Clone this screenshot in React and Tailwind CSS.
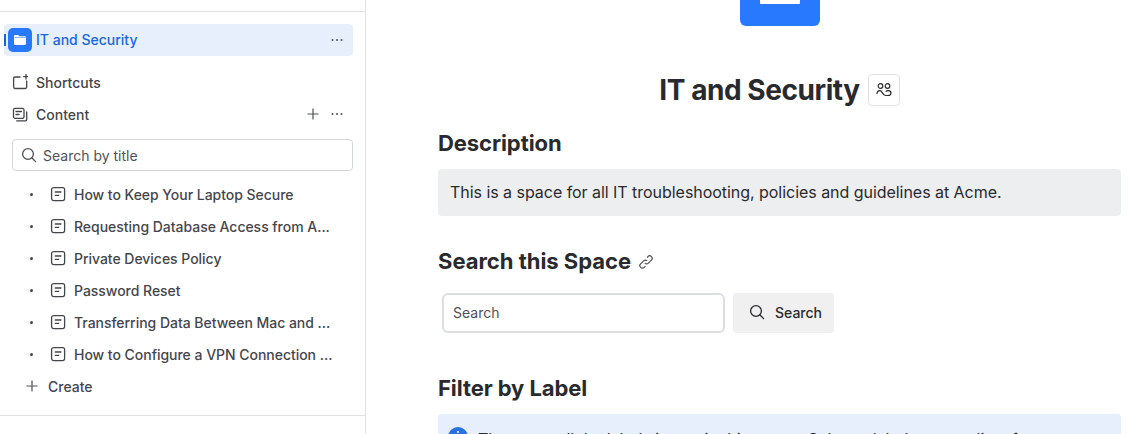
const pageTitles = [
  'How to Keep Your Laptop Secure',
  'Requesting Database Access from A...',
  'Private Devices Policy',
  'Password Reset',
  'Transferring Data Between Mac and ...',
  'How to Configure a VPN Connection ...',
];

const Dots = () => (
  <svg className="w-3.5 h-3.5 text-[#505258]" viewBox="0 0 14 14" fill="currentColor">
    <circle cx="2.500" cy="7" r="1" />
    <circle cx="7" cy="7" r="1" />
    <circle cx="11.500" cy="7" r="1" />
  </svg>
);

const Plus = ({ className }) => (
  <svg className={className} viewBox="0 0 12 12" fill="none" stroke="currentColor" strokeWidth="1.200">
    <path d="M6 .5v11M.5 6h11" />
  </svg>
);

const SearchIcon = ({ className }) => (
  <svg className={className} viewBox="0 0 16 16" fill="none" stroke="currentColor" strokeWidth="1.300" strokeLinecap="round">
    <circle cx="7" cy="7" r="5.400" />
    <path d="M11 11l3.600 3.600" />
  </svg>
);

const PageIcon = () => (
  <svg className="w-4 h-4 text-[#44464c] shrink-0" viewBox="0 0 16 16" fill="none" stroke="currentColor" strokeWidth="1.300">
    <rect x="1.600" y="1.600" width="13" height="13" rx="2" />
    <path d="M4.800 6h6.600M4.800 9.400h4.400" />
  </svg>
);

function Sidebar() {
  return (
    <aside className="w-[366px] shrink-0 border-r border-[#dfe1e4] flex flex-col text-[14px] text-[#44464c] font-medium">
      <div className="h-3 border-b border-[#dfe1e4] shrink-0"></div>

      <div className="relative mt-3 ml-1 mr-3 h-8 bg-[#e7effd] rounded flex items-center pl-1 pr-[9px] text-[#1868db]">
        <span className="absolute left-0 top-[10px] h-3 w-0.5 bg-[#1868db]"></span>
        <span className="w-6 h-6 rounded-[5px] bg-[#2979ff] flex items-center justify-center">
          <svg className="w-4 h-4" viewBox="0 0 16 16" fill="#fff">
            <path d="M2 4.200C2 3.500 2.500 3 3.200 3h3l1.200 1.200h5.400c.7 0 1.200.5 1.200 1.200v6.400c0 .7-.5 1.200-1.200 1.200H3.200C2.500 13 2 12.500 2 11.800z" />
            <path d="M2.500 5.400h11" stroke="#2979ff" strokeWidth=".6" />
          </svg>
        </span>
        <span className="ml-1 flex-1 pb-0.5">IT and Security</span>
        <Dots />
      </div>

      <div className="mt-[11px] h-8 flex items-center pl-3 pb-0.5 gap-2">
        <svg className="w-4 h-4 text-[#44464c]" viewBox="0 0 16 16" fill="none" stroke="currentColor" strokeWidth="1.300" strokeLinecap="round">
          <path d="M8 3H3C2.200 3 1.600 3.600 1.600 4.400v8.700c0 .8.600 1.400 1.400 1.400h10.300c.8 0 1.400-.6 1.400-1.400V7" />
          <path d="M14 .5V5M11.700 2.700h4.500" />
        </svg>
        <span>Shortcuts</span>
      </div>

      <div className="h-8 flex items-center pl-3 pr-[21px] pb-0.5 gap-2">
        <svg className="w-4 h-4 text-[#44464c]" viewBox="0 0 16 16" fill="none" stroke="currentColor" strokeWidth="1.300" strokeLinecap="round">
          <rect x="1.500" y="2.300" width="10.500" height="10" rx="1.600" />
          <path d="M4 5.500h5.500M4 8.500h3" />
          <path d="M14.700 6v7.500c0 .8-.6 1.400-1.400 1.400H4.700" />
        </svg>
        <span className="flex-1">Content</span>
        <Plus className="w-3 h-3 text-[#505258] mr-[3px]" />
        <Dots />
      </div>

      <div className="mt-2 ml-3 mr-3 h-8 border border-[#d4d5d8] rounded flex items-center pl-2 gap-1.5 text-[#505258] font-normal">
        <SearchIcon className="w-4 h-4" />
        <span>Search by title</span>
      </div>

      <ul className="mt-2">
        {pageTitles.map((title, index) => (
          <li key={index} className="h-8 flex items-center pl-[30px] pb-0.5">
            <span className="w-[3px] h-[3px] rounded-full bg-[#44464c] mr-[17px]"></span>
            <PageIcon />
            <span className="ml-2 whitespace-nowrap tracking-[-0.03px]">{title}</span>
          </li>
        ))}
      </ul>

      <div className="h-8 flex items-center pl-[26px] pb-0.5 gap-2.5">
        <Plus className="w-3 h-3 text-[#505258]" />
        <span>Create</span>
      </div>

      <div className="mt-3 border-t border-[#dfe1e4]"></div>
    </aside>
  );
}

function Main() {
  return (
    <main className="flex-1 min-w-0 pl-[72px] pr-[27px] text-[#292a2e]">
      <div className="mx-auto w-20 h-[26px] rounded-b-md bg-[#2979ff] flex justify-center">
        <div className="w-10 h-1 bg-white rounded-b-[1px]"></div>
      </div>

      <div className="mt-12 flex items-center justify-center gap-2">
        <h1 className="text-[28px] leading-8 font-bold tracking-[-0.44px]">IT and Security</h1>
        <span className="w-8 h-8 border border-[#dfe1e4] rounded flex items-center justify-center">
          <svg className="w-4 h-4" viewBox="0 0 16 16" fill="none" stroke="currentColor" strokeWidth="1.200">
            <circle cx="4.500" cy="4" r="2.300" />
            <circle cx="11.500" cy="4" r="2.300" />
            <path d="M1 12c0-2 1.300-3.300 3-3.300 2.300 0 2.600 4.800 5.500 4.800h2.500c1.800 0 3-1 3-2.500 0-1.600-1.300-2.400-3-2.400-1 0-1.800.4-2.300 1" />
          </svg>
        </span>
      </div>

      <h2 className="mt-[23px] text-[22px] leading-7 font-bold tracking-[-0.08px]">Description</h2>

      <div className="mt-[12px] h-[47px] bg-[#edeef0] rounded flex items-center px-3 pb-0.5 text-[16px] tracking-[-0.04px]">
        This is a space for all IT troubleshooting, policies and guidelines at Acme.
      </div>

      <h2 className="mt-[31px] text-[22px] leading-7 font-bold tracking-[-0.02px] flex items-center gap-[7px]">
        Search this Space
        <svg className="w-4 h-4 text-[#505258] mt-0.5" viewBox="0 0 16 16" fill="none" stroke="currentColor" strokeWidth="1.200">
          <path d="M6.800 9.200a2.500 2.500 0 0 0 3.600 0l3-3a2.500 2.500 0 0 0-3.600-3.600L9.500 3.900" />
          <path d="M9.200 6.800a2.500 2.500 0 0 0-3.600 0l-3 3a2.500 2.500 0 0 0 3.600 3.600l1.300-1.300" />
        </svg>
      </h2>

      <div className="mt-[18px] ml-1 flex items-center gap-2">
        <div className="w-[283px] h-10 border-2 border-[#dddee1] rounded-md flex items-center px-[9px] pb-0.5 text-[14px] text-[#505258]">
          Search
        </div>
        <button className="h-10 w-[101px] bg-[#f0f0f1] rounded flex items-center pl-4 pb-0.5 gap-2.5 text-[14px] font-medium">
          <SearchIcon className="w-4 h-4" />
          Search
        </button>
      </div>

      <h2 className="mt-[41px] text-[22px] leading-7 font-bold tracking-[-0.08px]">Filter by Label</h2>

      <div className="mt-[12px] h-12 bg-[#e7effd] rounded-t flex items-start gap-2.5 pl-2.5 pt-[13px] text-[16px] whitespace-nowrap overflow-hidden">
        <span className="w-5 h-5 rounded-full bg-[#2a70e0] shrink-0 flex justify-center pt-1">
          <span className="w-0.5 h-0.5 bg-white rounded-full"></span>
        </span>
        <span className="tracking-[-0.05px]">These are all the labels in use in this space. Select a label to see a list of content</span>
      </div>
    </main>
  );
}

export default function App() {
  return (
    <div className="h-[434px] w-[1148px] overflow-hidden flex bg-white font-['Inter',sans-serif]">
      <Sidebar />
      <Main />
    </div>
  );
}
